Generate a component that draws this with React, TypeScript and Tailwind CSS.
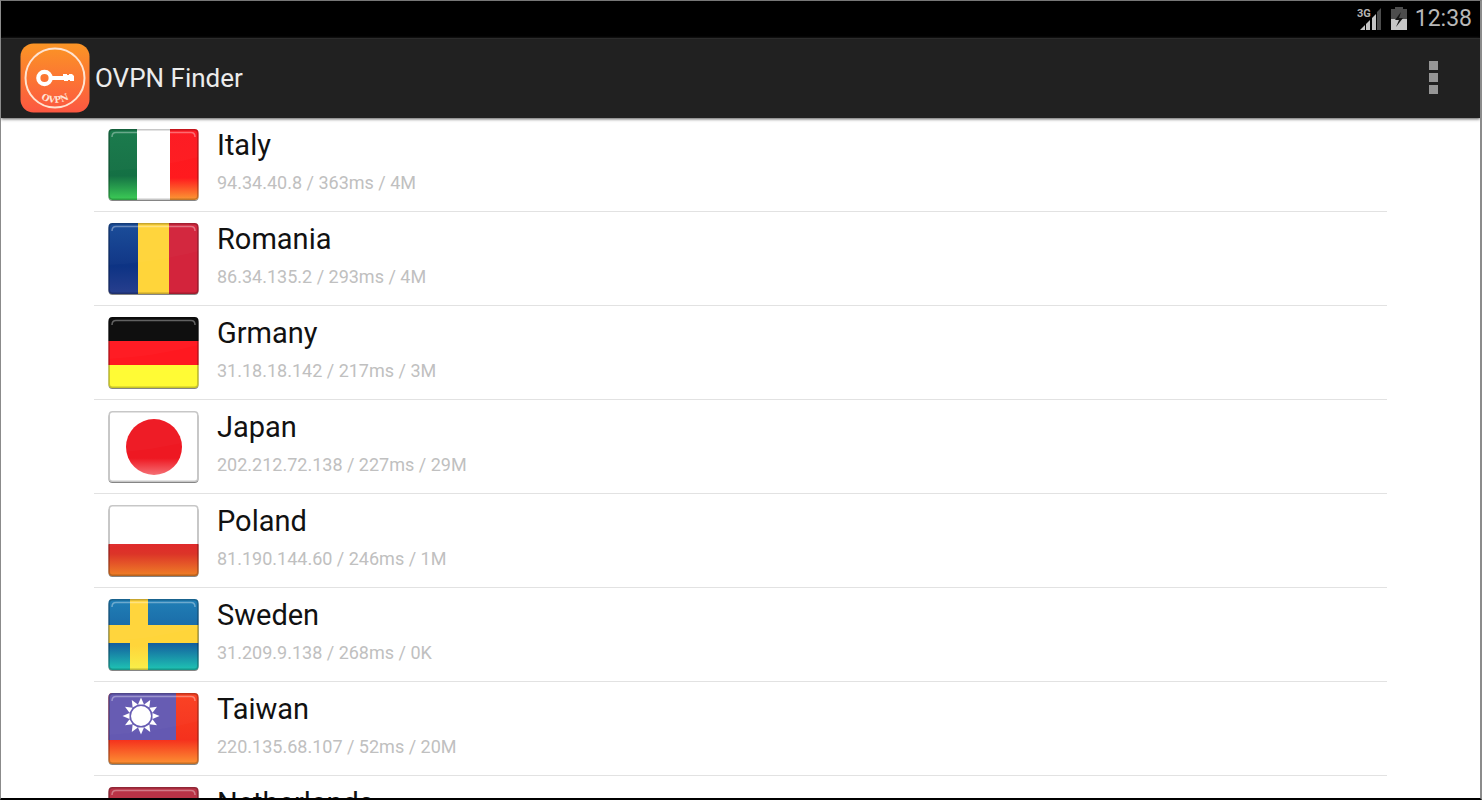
import type { ReactNode } from 'react';

interface Server {
  country: string;
  details?: string;
  flag: ReactNode;
}

// Flags are drawn on a 91x72 canvas, clipped to rounded corners by FlagIcon
const servers: Server[] = [
  {
    country: 'Italy',
    details: '94.34.40.8 / 363ms / 4M',
    flag: (
      <>
        <rect width="91" height="72" fill="#fff" />
        <rect width="29" height="72" fill="url(#italyGreen)" />
        <rect x="62" width="29" height="72" fill="url(#italyRed)" />
      </>
    ),
  },
  {
    country: 'Romania',
    details: '86.34.135.2 / 293ms / 4M',
    flag: (
      <>
        <rect width="31" height="72" fill="url(#romaniaBlue)" />
        <rect x="30" width="31" height="72" fill="#ffd53a" />
        <rect x="61" width="30" height="72" fill="#d3243c" />
      </>
    ),
  },
  {
    country: 'Grmany',
    details: '31.18.18.142 / 217ms / 3M',
    flag: (
      <>
        <rect width="91" height="24" fill="#0b0b0b" />
        <rect y="24" width="91" height="24" fill="#ff1820" />
        <rect y="48" width="91" height="24" fill="#fffb35" />
      </>
    ),
  },
  {
    country: 'Japan',
    details: '202.212.72.138 / 227ms / 29M',
    flag: (
      <>
        <rect width="91" height="72" fill="#fff" />
        <circle cx="46" cy="36" r="28" fill="url(#japanRed)" />
      </>
    ),
  },
  {
    country: 'Poland',
    details: '81.190.144.60 / 246ms / 1M',
    flag: (
      <>
        <rect width="91" height="40" fill="#fff" />
        <rect y="39" width="91" height="33" fill="url(#polandRed)" />
      </>
    ),
  },
  {
    country: 'Sweden',
    details: '31.209.9.138 / 268ms / 0K',
    flag: (
      <>
        <rect width="91" height="72" fill="url(#swedenBlue)" />
        <rect y="26" width="91" height="18" fill="#ffd53a" />
        <rect x="22" width="18" height="72" fill="url(#swedenYellow)" />
      </>
    ),
  },
  {
    country: 'Taiwan',
    details: '220.135.68.107 / 52ms / 20M',
    flag: (
      <>
        <rect width="91" height="72" fill="url(#taiwanRed)" />
        <rect width="68" height="47" fill="#6459b2" />
        <g transform="translate(33 23)" fill="#fff">
          <circle r="10" />
          {Array.from({ length: 12 }, (_, i) => (
            <path key={i} d="M-3 -11.5 0 -18.5 3 -11.5Z" transform={`rotate(${i * 30})`} />
          ))}
        </g>
      </>
    ),
  },
  {
    country: 'Netherlands',
    flag: (
      <>
        <rect width="91" height="24" fill="#b92f43" />
        <rect y="24" width="91" height="24" fill="#fff" />
        <rect y="48" width="91" height="24" fill="#23509e" />
      </>
    ),
  },
];

interface GradientProps {
  id: string;
  stops: [string, string][];
}

function Gradient({ id, stops }: GradientProps) {
  return (
    <linearGradient id={id} x1="0" y1="0" x2="0" y2="1">
      {stops.map(([offset, color]) => (
        <stop key={offset} offset={offset} stopColor={color} />
      ))}
    </linearGradient>
  );
}

function FlagDefs() {
  return (
    <svg className="absolute h-0 w-0" aria-hidden="true">
      <defs>
        <Gradient id="italyGreen" stops={[['0', '#17794a'], ['0.65', '#147044'], ['1', '#3ed157']]} />
        <Gradient id="italyRed" stops={[['0', '#fc1820'], ['0.68', '#ff1a1e'], ['1', '#fba034']]} />
        <Gradient id="romaniaBlue" stops={[['0', '#174b98'], ['0.6', '#0d3384'], ['1', '#293f8e']]} />
        <Gradient id="japanRed" stops={[['0', '#ee1822'], ['0.7', '#ee1822'], ['1', '#f57075']]} />
        <Gradient id="polandRed" stops={[['0', '#df2a2b'], ['0.3', '#dc3428'], ['1', '#f08427']]} />
        <Gradient id="swedenBlue" stops={[['0', '#1c7db5'], ['0.62', '#145f9f'], ['1', '#1fc9b4']]} />
        <Gradient id="swedenYellow" stops={[['0', '#ffd53a'], ['0.65', '#ffd53a'], ['1', '#f8f04a']]} />
        <Gradient id="taiwanRed" stops={[['0', '#fa4020'], ['0.65', '#f5311d'], ['1', '#fd9634']]} />
        <clipPath id="flagShape">
          <rect x="0.5" width="90" height="71" rx="4" />
        </clipPath>
      </defs>
    </svg>
  );
}

function FlagIcon({ children }: { children: ReactNode }) {
  return (
    <svg viewBox="0 0 91 72" className="h-[72px] w-[91px] shrink-0" aria-hidden="true">
      <rect x="0.5" y="2" width="90" height="70" rx="4" fill="#858585" />
      <g clipPath="url(#flagShape)">
        {children}
        <path d="M0 42Q45 40 91 28V0H0Z" fill="#fff" opacity="0.02" />
        <rect x="0.5" y="0" width="90" height="71" rx="4" fill="none" stroke="#000" strokeWidth="3" opacity="0.22" />
      </g>
      <path d="M4 8Q4 3.5 8 3.5H83Q87 3.5 87 8" fill="none" stroke="#fff" strokeWidth="1.5" opacity="0.35" />
    </svg>
  );
}

function AppLogo() {
  return (
    <svg viewBox="0 0 70 70" className="h-[70px] w-[70px]" aria-hidden="true">
      <defs>
        <linearGradient id="logoFill" x1="0" y1="0" x2="0" y2="1">
          <stop offset="0" stopColor="#fb9525" />
          <stop offset="1" stopColor="#fc5741" />
        </linearGradient>
        <path id="logoArc" d="M12 46A26 26 0 0 0 58 46" />
      </defs>
      <rect x="0.5" y="0.5" width="69" height="69" rx="13" fill="url(#logoFill)" />
      <circle cx="35" cy="35" r="29.5" fill="none" stroke="#ffe3d0" strokeWidth="2" />
      <circle cx="24.5" cy="35" r="6.2" fill="none" stroke="#fff" strokeWidth="4.2" />
      <path d="M31 33H43V31H47V32H49V31H52L54 33V38H50V37H48V38H44V37H31Z" fill="#fff" />
      <text fill="#ffe3d4" fontSize="9" fontWeight="700" textAnchor="middle" fontFamily="'DejaVu Serif', serif">
        <textPath href="#logoArc" startOffset="50%">OVPN</textPath>
      </text>
    </svg>
  );
}

function SignalIcon() {
  return (
    <svg viewBox="0 0 26 26" className="h-[26px] w-[26px]" aria-label="3G signal">
      <text x="0" y="11" fill="#b4b4b4" fontSize="11" fontWeight="700" fontFamily="Roboto, sans-serif">3G</text>
      <path d="M3 24 8 19V24Z" fill="#c4c4c4" />
      <path d="M9 18 13 14V24H9Z" fill="#c4c4c4" />
      <path d="M15 12 19 8V24H15Z" fill="#c4c4c4" />
      <path d="M20 6 24 2V24H20Z" fill="#4d4d4d" />
    </svg>
  );
}

function BatteryIcon() {
  return (
    <svg viewBox="0 0 16 23" className="h-[23px] w-4" aria-label="Battery charging">
      <path d="M4 0H12V2H16V12H0V2H4Z" fill="#4d4d4d" />
      <path d="M0 12H16V23H0Z" fill="#c6c6c6" />
      <path d="M10 5 4 13H8L5 20 12 11H8Z" fill="#151515" />
    </svg>
  );
}

function StatusBar() {
  return (
    <div className="flex h-[37px] shrink-0 items-center justify-end bg-black pb-0.5 pr-2">
      <SignalIcon />
      <span className="mx-2 flex">
        <BatteryIcon />
      </span>
      <span className="text-[23px] leading-none text-[#b8b8b8]">12:38</span>
    </div>
  );
}

function ActionBar() {
  return (
    <header className="z-10 flex h-[80px] shrink-0 items-center justify-between border-t border-[#2c2c2c] bg-[#212121] pb-0.5 pl-[19px] pr-8 shadow-[0_1px_3px_#555]">
      <div className="flex items-center gap-[5px]">
        <AppLogo />
        <h1 className="text-[26px] leading-8 text-[#ececec]">OVPN Finder</h1>
      </div>
      <button type="button" aria-label="More options" className="flex flex-col gap-[3px] px-2.5 py-3">
        <span className="h-[9px] w-[9px] bg-[#969696]" />
        <span className="h-[9px] w-[9px] bg-[#969696]" />
        <span className="h-[9px] w-[9px] bg-[#969696]" />
      </button>
    </header>
  );
}

export default function App() {
  return (
    <div className="flex h-screen flex-col overflow-hidden border-t border-r-2 border-b-2 border-l border-t-[#777] border-r-[#8b8b8b] border-b-black border-l-[#8b8b8b] bg-white font-['Roboto',sans-serif]">
      <FlagDefs />
      <StatusBar />
      <ActionBar />
      <main className="min-h-0 flex-1 overflow-hidden px-[93px]">
        <ul>
          {servers.map((server) => (
            <li key={server.country} className="border-b border-[#e2e2e2]">
              <button type="button" className="flex h-[93px] w-full items-start gap-[18px] pl-3.5 pt-[11px] text-left">
                <FlagIcon>{server.flag}</FlagIcon>
                <span className="flex flex-col gap-2.5">
                  <span className="text-[29px] leading-8 text-[#111]">{server.country}</span>
                  <span className="text-[18px] leading-6 text-[#c0c0c0]">{server.details}</span>
                </span>
              </button>
            </li>
          ))}
        </ul>
      </main>
    </div>
  );
}
